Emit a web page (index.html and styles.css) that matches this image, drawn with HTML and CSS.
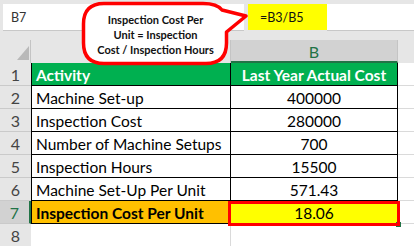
FILE: index.html
```html
<!DOCTYPE html>
<html>
<head>
<meta charset="utf-8">
<link rel="stylesheet" href="styles.css">
</head>
<body>
<div class="app">
  <div class="toolbar">
    <div class="namebox"><span>B7</span><span class="fx">fx</span></div>
    <div class="formula">=B3/B5</div>
    <div class="formula-rest"></div>
  </div>
  <div class="sheet">
    <div class="row hdr">
      <div class="corner"><span class="tri"></span></div>
      <div class="ch"></div>
      <div class="ch sel">B</div>
      <div class="ch rest"></div>
    </div>
    <div class="row r1">
      <div class="rn">1</div>
      <div class="a">Activity</div>
      <div class="b">Last Year Actual Cost</div>
      <div class="c"></div>
    </div>
    <div class="row">
      <div class="rn">2</div>
      <div class="a">Machine Set-up</div>
      <div class="b">400000</div>
      <div class="c"></div>
    </div>
    <div class="row">
      <div class="rn">3</div>
      <div class="a">Inspection Cost</div>
      <div class="b">280000</div>
      <div class="c"></div>
    </div>
    <div class="row">
      <div class="rn">4</div>
      <div class="a">Number of Machine Setups</div>
      <div class="b">700</div>
      <div class="c"></div>
    </div>
    <div class="row">
      <div class="rn">5</div>
      <div class="a">Inspection Hours</div>
      <div class="b">15500</div>
      <div class="c"></div>
    </div>
    <div class="row">
      <div class="rn">6</div>
      <div class="a">Machine Set-Up Per Unit</div>
      <div class="b">571.43</div>
      <div class="c"></div>
    </div>
    <div class="row r7">
      <div class="rn sel">7</div>
      <div class="a">Inspection Cost Per Unit</div>
      <div class="b active">18.06</div>
      <div class="c"></div>
    </div>
    <div class="row r8">
      <div class="rn">8</div>
      <div class="a"></div>
      <div class="b"></div>
      <div class="c"></div>
    </div>
  </div>
  <div class="callout">
    <svg class="bubble" width="260" height="70" viewBox="0 0 260 70">
      <path d="M104 3.5 H203 Q217 3.5 222 10 L246 16 L226.5 32 V43 Q226.5 63.5 206 63.5 H104 Q83.5 63.5 83.5 43 V24 Q83.5 3.5 104 3.5 Z" fill="#fff" stroke="#ff0000" stroke-width="3.5" stroke-linejoin="round"/>
    </svg>
    <div class="callout-text">Inspection Cost Per<br>Unit = Inspection<br>Cost / Inspection Hours</div>
  </div>
</div>
</body>
</html>
```

FILE: styles.css
```css
html, body {
  margin: 0;
  padding: 0;
}
body {
  width: 414px;
  height: 246px;
  overflow: hidden;
  background: #fff;
  font-family: Lato, "Liberation Sans", sans-serif;
  color: #000;
}
.app {
  position: relative;
  width: 414px;
  height: 246px;
  overflow: hidden;
}
.toolbar {
  display: flex;
  align-items: flex-start;
  height: 40px;
  box-sizing: border-box;
  padding-top: 4px;
  background: #e6e6e6;
}
.namebox {
  margin-left: 3px;
  width: 241px;
  height: 27px;
  box-sizing: border-box;
  background: #fff;
  border-bottom: 1px solid #c8c8c8;
  display: flex;
  align-items: center;
  justify-content: space-between;
  padding: 0 10px 0 8px;
  font-size: 12.5px;
  color: #333;
}
.fx {
  font-family: "DejaVu Serif", serif;
  font-style: italic;
  color: #9a9a9a;
  font-size: 12px;
}
.formula {
  margin-left: 4px;
  width: 79px;
  height: 26px;
  box-sizing: border-box;
  padding-left: 12px;
  background: #ffff00;
  display: flex;
  align-items: center;
  font-size: 12.5px;
  color: #111;
}
.formula-rest {
  flex: 1;
  height: 27px;
  box-sizing: border-box;
  background: #fff;
  border-bottom: 1px solid #c8c8c8;
}
.row {
  display: grid;
  grid-template-columns: 31px 200px 167px 1fr;
  height: 23px;
}
.row > div {
  box-sizing: border-box;
  height: 23px;
  line-height: 22px;
  font-size: 15.5px;
  white-space: nowrap;
  overflow: hidden;
}
.corner {
  position: relative;
  background: #e6e6e6;
  border-right: 1px solid #c4c4c4;
}
.tri {
  position: absolute;
  left: 17px;
  top: 6px;
  width: 0;
  height: 0;
  border-style: solid;
  border-width: 0 0 14px 12px;
  border-color: transparent transparent #b9b9b9 transparent;
}
.ch {
  background: #e6e6e6;
  text-align: center;
  color: #444;
  border-right: 1px solid #c4c4c4;
}
.row > .ch.sel {
  background: #d2d2d2;
  color: #217346;
  border-bottom: 2px solid #217346;
  line-height: 23px;
  font-size: 16px;
}
.ch.rest {
  border-right: none;
}
.row > .rn {
  background: #e6e6e6;
  color: #444;
  text-align: center;
  border-bottom: 1px solid #cacaca;
  padding-top: 1px;
  font-size: 16px;
}
.row > .rn.sel {
  background: #d2d2d2;
  color: #217346;
  border-right: 2px solid #217346;
}
.a {
  border-left: 1px solid #000;
  border-right: 1px solid #000;
  border-bottom: 1px solid #000;
  padding-left: 4px;
  padding-top: 1px;
}
.b {
  border-right: 1px solid #000;
  border-bottom: 1px solid #000;
  text-align: center;
  padding-top: 1px;
}
.c {
  border-bottom: 1px solid #dadada;
}
.r1 .a, .r1 .b {
  background: #00b050;
  color: #fff;
  font-weight: bold;
}
.r7 .a {
  background: #ffc000;
  font-weight: bold;
}
.row.r7 > .b {
  background: #ffff00;
  overflow: visible;
  position: relative;
}
.r7 .b.active::after {
  content: "";
  position: absolute;
  left: -3px;
  top: 0;
  right: -3px;
  bottom: -3px;
  border: 3.5px solid #ff0000;
}
.r7 .b.active::before {
  content: "";
  position: absolute;
  right: -4px;
  bottom: -4px;
  width: 5px;
  height: 5px;
  background: #217346;
}
.r8 .a, .r8 .b {
  border: none;
  border-bottom: 1px solid #dadada;
}
.r8 .a {
  border-right: 1px solid #dadada;
}
.callout {
  position: absolute;
  left: 0;
  top: 0;
  width: 260px;
  height: 70px;
}
.bubble {
  position: absolute;
  left: 0;
  top: 0;
}
.callout-text {
  position: absolute;
  left: 83px;
  top: 12px;
  width: 145px;
  text-align: center;
  font-size: 11px;
  line-height: 15px;
  font-weight: bold;
  color: #111;
  white-space: nowrap;
}
```
